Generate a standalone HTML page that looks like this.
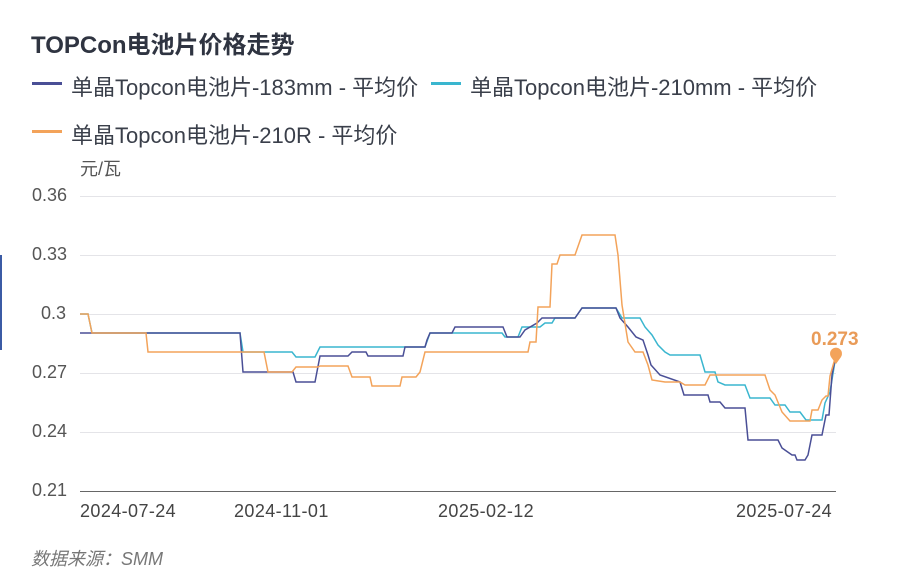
<!DOCTYPE html><html><head><meta charset="utf-8"><style>
body{margin:0;width:911px;height:582px;background:#fff;overflow:hidden;font-family:"Liberation Sans","Noto Sans CJK SC",sans-serif;position:relative}
.t{position:absolute;white-space:nowrap}
.y{font-size:18px;color:#555}
.d{font-size:18px;color:#444;letter-spacing:0.4px}
</style></head><body>
<div style="position:absolute;left:0;top:255px;width:2px;height:95px;background:#3b5ba5"></div>
<div class="t" style="left:31px;top:25px;font-size:24px;font-weight:bold;color:#2f3441">TOPCon电池片价格走势</div>
<div style="position:absolute;left:32px;top:82px;width:30px;height:3px;background:#4a4f96"></div>
<div class="t" style="left:71px;top:70px;font-size:22px;color:#3a3f4a">单晶Topcon电池片-183mm - 平均价</div>
<div style="position:absolute;left:431px;top:82px;width:30px;height:3px;background:#3ab6cf"></div>
<div class="t" style="left:470px;top:70px;font-size:22px;color:#3a3f4a">单晶Topcon电池片-210mm - 平均价</div>
<div style="position:absolute;left:32px;top:130px;width:30px;height:3px;background:#f3a35a"></div>
<div class="t" style="left:71px;top:118px;font-size:22px;color:#3a3f4a">单晶Topcon电池片-210R - 平均价</div>
<div class="t" style="left:80px;top:155px;font-size:18px;color:#555">元/瓦</div>
<div class="t y" style="left:32px;top:185px">0.36</div>
<div class="t y" style="left:32px;top:244px">0.33</div>
<div class="t y" style="left:41px;top:303px">0.3</div>
<div class="t y" style="left:32px;top:362px">0.27</div>
<div class="t y" style="left:32px;top:421px">0.24</div>
<div class="t y" style="left:32px;top:480px">0.21</div>
<div class="t d" style="left:80px;top:501px">2024-07-24</div>
<div class="t d" style="left:234px;top:501px">2024-11-01</div>
<div class="t d" style="left:438px;top:501px">2025-02-12</div>
<div class="t d" style="left:736px;top:501px">2025-07-24</div>
<div class="t" style="left:31px;top:545px;font-size:18px;color:#777;font-style:italic">数据来源：SMM</div>
<svg width="911" height="582" style="position:absolute;left:0;top:0" fill="none" stroke-width="1.5">
<g stroke="#e4e4e8" stroke-width="1"><path d="M80 196.5H836M80 255.5H836M80 314.5H836M80 373.5H836M80 432.5H836"/></g>
<path d="M80 491.5H836" stroke="#666" stroke-width="1"/>
<polyline stroke="#3ab6cf" points="80,314 88,314 92,333 240,333 243,352 292,352 296,357 315,357 320,347 425,347 430,333 502,333 505,337 518,337 522,327 540,327 545,323 552,323 555,318 575,318 582,308 616,308 622,318 640,318 645,327 652,335 658,345 665,352 670,355 700,355 705,372 715,372 718,382 725,385 745,385 750,398 770,398 775,405 785,405 790,412 800,412 806,420 822,420 825,403 830,392 836,355"/>
<polyline stroke="#4a4f96" points="80,333 146,333 240,333 243,372 293,372 296,382 315,382 320,356 348,356 352,352 366,352 368,356 403,356 405,347 425,347 427,340 430,333 452,333 455,327 503,327 507,337 520,337 525,330 537,323 542,318 575,318 582,308 616,308 620,318 628,327 636,337 643,340 648,355 651,365 660,375 680,382 684,395 708,395 710,402 720,402 725,408 745,408 748,440 778,440 782,448 792,455 795,455 797,460 805,460 808,455 812,435 822,435 826,415 829,415 832,375 836,355"/>
<polyline stroke="#f3a35a" points="80,314 88,314 92,333 146,333 148,352 264,352 268,372 292,372 296,367 318,367 320,366 348,366 352,377 370,377 372,386 400,386 402,377 416,377 420,372 425,352 528,352 530,342 536,342 538,307 550,307 552,264 557,264 560,255 575,255 582,235 615,235 618,255 622,305 628,342 635,352 643,352 648,365 652,380 665,382 680,382 685,385 705,385 710,375 765,375 770,390 775,395 782,412 790,421 810,421 812,410 818,410 822,400 826,396 828,396 830,376 836,355"/>
<path d="M836 364 L831 357 A6 6 0 1 1 841 357 Z" fill="#f3a35a" stroke="none"/>
<text x="811" y="345" font-family="Liberation Sans" font-size="19" font-weight="bold" fill="#e99b58" stroke="none">0.273</text>
</svg>
</body></html>
